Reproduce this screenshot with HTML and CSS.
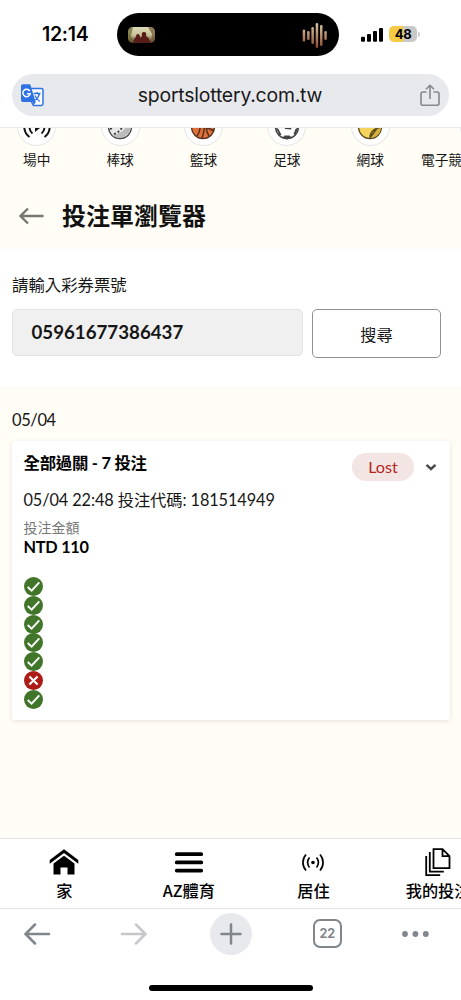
FILE: index.html
```
<!DOCTYPE html>
<html lang="zh-Hant">
<head>
<meta charset="utf-8">
<meta name="viewport" content="width=device-width, initial-scale=1">
<title>投注單瀏覽器</title>
<link rel="stylesheet" href="styles.css">
</head>
<body>
<svg class="defs" width="0" height="0">
  <symbol id="check" viewBox="0 0 19 19"><circle cx="9.5" cy="9.5" r="9.5" fill="#41762a"/><path d="M3.700 10l3.900 3.700 7.700-8.300" fill="none" stroke="#fff" stroke-width="1.900"/></symbol>
  <symbol id="cross" viewBox="0 0 19 19"><circle cx="9.5" cy="9.5" r="9.5" fill="#ad1d17"/><path d="M5.400 5.400l8.200 8.200M13.600 5.400l-8.200 8.200" fill="none" stroke="#fff" stroke-width="2.100"/></symbol>
</svg>
<header class="status">
  <span class="time">12:14</span>
  <div class="island">
    <svg class="art" width="27" height="16" viewBox="0 0 27 16">
      <defs><linearGradient id="sky" x2="0" y2="1"><stop offset="0" stop-color="#dedab8"/><stop offset=".5" stop-color="#c9c49a"/><stop offset="1" stop-color="#4a2d16"/></linearGradient><clipPath id="round"><rect width="27" height="16" rx="5"/></clipPath></defs>
      <g clip-path="url(#round)"><rect width="27" height="16" fill="url(#sky)"/><path d="M0 0h5l-2 9 3 7H0z" fill="#66652b" opacity=".7"/><path d="M20 0h7v16h-4l1-9z" fill="#72552f" opacity=".7"/><path d="M5 16q1-5 3-6 0-3 2-3t2 4l2-2q-1-4 2-4 3 0 2 4 4 2 4 7z" fill="#581d18"/></g>
    </svg>
    <svg width="26" height="26" viewBox="0 0 26 26">
      <defs><linearGradient id="wave" gradientUnits="userSpaceOnUse" x1="0" y1="1" x2="0" y2="25"><stop offset="0" stop-color="#d4c7a5"/><stop offset=".5" stop-color="#b98e6c"/><stop offset="1" stop-color="#8e4c35"/></linearGradient></defs>
      <g fill="url(#wave)"><rect x=".7" y="7.5" width="2.500" height="12" rx="1.200"/><rect x="5.100" y="9" width="2.500" height="9" rx="1.200"/><rect x="9.400" y="5" width="2.500" height="17" rx="1.200"/><rect x="13.700" y="1" width="2.500" height="25" rx="1.200"/><rect x="18" y="3" width="2.500" height="21" rx="1.200"/><rect x="22.300" y="9" width="2.500" height="9" rx="1.200"/></g>
    </svg>
  </div>
  <svg class="signal" width="22" height="14" viewBox="0 0 22 14"><rect y="8.700" width="4" height="5" rx="1"/><rect x="6" y="6" width="4" height="7.700" rx="1"/><rect x="12" y="3" width="4" height="10.700" rx="1"/><rect x="18" width="4" height="13.700" rx="1"/></svg>
  <span class="battery">48</span><i class="cap"></i>
</header>
<div class="address">
  <svg width="23" height="23" viewBox="0 0 23 23"><path d="M10 4.400h10.300q1.700 0 1.700 1.700v13.700q0 1.700-1.700 1.700h-7.800L10 17" fill="#fff" stroke="#2f72e4" stroke-width="1.500"/><path d="M1.700.3h6.600q1 0 1.300 1l5 16.700H1.700Q0 18 0 16.300V2Q0 .3 1.700.3zM12 18h3l-3 3.500z" fill="#2f72e4"/><path d="M8.700 7A3.700 3.700 0 1 0 9.200 9.700H5.900" fill="none" stroke="#fff" stroke-width="1.500"/><path d="M12.500 9.500h7M16 8v1.500M18.500 9.500q-1 4.500-4.500 6.500M13.800 11.500q2 4 5.200 6" fill="none" stroke="#2f72e4" stroke-width="1.300"/></svg>
  <span class="host">sportslottery.com.tw</span>
  <svg width="20" height="23" viewBox="0 0 20 23" fill="none" stroke="#84898e" stroke-width="1.600"><path d="M6.500 8H3Q1 8 1 10v9.200q0 2 2 2h14q2 0 2-2V10q0-2-2-2h-3.500M10 15V1.500M6 5.300l4-4 4 4"/></svg>
</div>
<main class="page">
  <nav class="sports">
    <a><span class="disc"><svg width="30" height="30" viewBox="0 0 30 30" fill="none" stroke="#151515" stroke-width="2"><path d="M5.500 7a12 12 0 0 0 2 18M24.500 7a12 12 0 0 1-2 18M9.500 10a8 8 0 0 0 1 11.500M20.500 10a8 8 0 0 1-1 11.500"/><path d="M13 12v8l5-4z" fill="#151515" stroke="none"/></svg></span>場中</a>
    <a><span class="disc"><svg width="26" height="26" viewBox="0 0 26 26"><circle cx="13" cy="13" r="11.500" fill="#e8e8e8" stroke="#444" stroke-width="1.400"/><path d="M5 21q12-1 17-13l2 6q-3 9-12 10-4 0-7-3z" fill="#bbb"/><path d="M7 20q9-3 11-15M3 15q6-1 8-9" fill="none" stroke="#333" stroke-width="1.700" stroke-dasharray="2 2"/></svg></span>棒球</a>
    <a><span class="disc"><svg width="26" height="26" viewBox="0 0 26 26"><circle cx="13" cy="13" r="11.500" fill="#df7138" stroke="#54311f" stroke-width="1.400"/><path d="M2 13q12-2 22 4M13 1.500Q16 14 12 24M5 5q9 7 2 17M21 5q-8 8-2 17" fill="none" stroke="#54311f" stroke-width="1.500"/></svg></span>籃球</a>
    <a><span class="disc"><svg width="26" height="26" viewBox="0 0 26 26"><circle cx="13" cy="13" r="11.500" fill="#fff" stroke="#444" stroke-width="1.500"/><path d="M9 9l5-3 5 4-2 5.500-6-.5zM1.500 13l3 2 3 6-2 .5zM8.500 24l2-2.500h5l2 2-4.500 2zM24.500 13l-3 2-2 5 2 1z" fill="#444"/></svg></span>足球</a>
    <a><span class="disc"><svg width="26" height="26" viewBox="0 0 26 26"><circle cx="13" cy="13" r="11.500" fill="#f5d35c" stroke="#5a4b1f" stroke-width="1.400"/><path d="M13 24q0-9 11-11 0 9-11 11z" fill="#d9b13e"/><path d="M13 24q0-9 11.500-11M13.500 23l6-8" fill="none" stroke="#5a4b1f" stroke-width="1.500"/></svg></span>網球</a>
    <a class="wide"><span class="disc"></span>電子競技</a>
  </nav>
  <div class="heading">
    <svg width="25" height="18" viewBox="0 0 25 18" fill="none" stroke="#777672" stroke-width="2.300"><path d="M24.500 9H2M9 1.500L1.500 9 9 16.500"/></svg>
    <h1>投注單瀏覽器</h1>
  </div>
  <section class="search">
    <label>請輸入彩券票號</label>
    <div class="controls"><div class="field">05961677386437</div><button>搜尋</button></div>
  </section>
  <section class="results">
    <div class="date">05/04</div>
    <article class="card">
      <div class="top"><h2>全部過關 - 7 投注</h2><span class="lost">Lost</span>
        <svg width="12" height="8" viewBox="0 0 12 8" fill="none" stroke="#4b4b4b" stroke-width="2.400"><path d="M1.500 1.800L6 6l4.500-4.200"/></svg></div>
      <div class="code">05/04 22:48 投注代碼: 181514949</div>
      <div class="caption">投注金額</div>
      <div class="amount">NTD 110</div>
      <div class="legs">
        <svg><use href="#check"/></svg><svg><use href="#check"/></svg><svg><use href="#check"/></svg><svg><use href="#check"/></svg><svg><use href="#check"/></svg><svg><use href="#cross"/></svg><svg><use href="#check"/></svg>
      </div>
    </article>
  </section>
</main>
<nav class="tabs">
  <a><svg width="30" height="30" viewBox="0 0 30 30"><path d="M15 2.200L29.300 13v3.800L15 6 .7 16.800V13z"/><path d="M15 8.700l10.500 7.800V27.500H18.500v-7h-7v7H4.500v-11z"/></svg>家</a>
  <a><svg width="30" height="30" viewBox="0 0 30 30" stroke="#000" stroke-width="3.700" stroke-linecap="round"><path d="M2.700 7.200h24.600M2.700 15.400h24.600M2.700 23.600h24.600"/></svg>AZ體育</a>
  <a><svg width="30" height="30" viewBox="0 0 30 30" fill="none" stroke="#000" stroke-width="1.700"><circle cx="15" cy="15.500" r="1.800" fill="#000" stroke="none"/><path d="M8 7.500a12 12 0 0 0 0 16M22 7.500a12 12 0 0 1 0 16M11.500 10.500a7.500 7.500 0 0 0 0 10M18.500 10.500a7.500 7.500 0 0 1 0 10"/></svg>居住</a>
  <a><svg width="30" height="30" viewBox="0 0 30 30" fill="none" stroke="#000" stroke-width="1.800"><path d="M10.500 2.200h9l7 7v12h-16zM19.500 2.200v7h7M6.800 5v19.700h14M3.200 9v19.200h14"/></svg>我的投注</a>
</nav>
<footer class="toolbar">
  <a><svg width="27" height="22" viewBox="0 0 27 22" fill="none" stroke="#80868b" stroke-width="2.500" stroke-linecap="round"><path d="M25 11H1.700M11 1.500L1.500 11l9.500 9.500"/></svg></a>
  <a><svg width="27" height="22" viewBox="0 0 27 22" fill="none" stroke="#c6c7c8" stroke-width="2.500" stroke-linecap="round"><path d="M2 11h23.300M16 1.500l9.500 9.500-9.500 9.500"/></svg></a>
  <a class="add"><svg width="22" height="22" viewBox="0 0 22 22" stroke="#80868b" stroke-width="2.500" stroke-linecap="round"><path d="M1.500 11h19M11 1.500v19"/></svg></a>
  <a class="count">22</a>
  <a class="more"><svg width="27" height="6" viewBox="0 0 27 6" fill="#80868b"><circle cx="3" cy="3" r="2.900"/><circle cx="13.400" cy="3" r="2.900"/><circle cx="23.800" cy="3" r="2.900"/></svg></a>
</footer>
<div class="homebar"></div>
</body>
</html>
```
FILE: styles.css
```
* { box-sizing: border-box; }
body { margin: 0; width: 461px; height: 1000px; overflow: hidden; background: #fff; color: #161616; font-family: Lato, "Noto Sans CJK TC", sans-serif; }
svg { display: block; flex: none; }
.defs { position: absolute; }
h1, h2 { margin: 0; white-space: nowrap; }

.status { height: 74px; padding: 13px 0 0 42px; display: flex; align-items: flex-start; }
.time { width: 75px; font: 600 19.5px/43px Inter, sans-serif; letter-spacing: -.3px; color: #000; }
.island { width: 222px; height: 43px; border-radius: 22px; background: #000; display: flex; align-items: center; justify-content: space-between; padding: 0 11px; }
.signal { margin: 14.5px 6px 0 22px; }
.battery { width: 28px; height: 16px; margin-top: 13px; border-radius: 5px; background: linear-gradient(90deg, #f5ca45 49%, #c9c9c9 49%); font: 700 13px/16px Inter, sans-serif; letter-spacing: -.3px; text-align: center; color: #000; }
.cap { width: 2px; height: 5px; margin: 19px 0 0 1px; border-radius: 0 2px 2px 0; background: #ccc; }

.address { height: 42px; margin: 0 12px; padding: 0 9px; display: flex; align-items: center; justify-content: space-between; border-radius: 21px; background: #e8e9ed; }
.host { padding-right: 4px; font: 400 19.4px/42px Inter, sans-serif; letter-spacing: -.2px; color: #1a1a1a; }

.page { height: 711px; margin-top: 11px; border-top: 1px solid #e9e9e7; background: #fffdf5; }
.sports { height: 61px; display: flex; overflow: hidden; margin-left: -5px; }
.sports a { flex: none; width: 83.4px; display: flex; flex-direction: column; align-items: center; font-size: 13.7px; line-height: 20px; white-space: nowrap; }
.sports .wide { width: 134px; padding-left: 9px; align-items: flex-start; }
.disc { width: 39px; height: 39px; margin: -21px 0 4px; border: 1px solid #e5e5e5; border-radius: 50%; background: #fff; display: flex; align-items: center; justify-content: center; }
.wide .disc { margin-left: 39px; }
.heading { height: 60px; display: flex; align-items: center; gap: 18px; padding: 0 0 6px 19px; }
.heading h1 { font-size: 24px; line-height: 36px; color: #111; }
.search { height: 137px; padding: 24px 20px 0 12px; background: #fff; }
.search label { display: block; font-size: 16.4px; line-height: 24px; margin-bottom: 12px; }
.controls { display: flex; gap: 9px; align-items: flex-start; }
.field { width: 291px; height: 47px; padding-left: 18.5px; border: 1px solid #e4e4e4; border-radius: 5px; background: #f0f0f0; font-weight: 700; font-size: 18.7px; line-height: 45px; }
.controls button { width: 129px; height: 49px; padding: 0; border: 1px solid #929292; border-radius: 5px; background: #fff; color: #161616; font: 400 16.2px/46px "Noto Sans CJK TC", sans-serif; }
.results { padding: 22px 12px 0; }
.date { height: 33px; font-size: 16.5px; line-height: 24px; letter-spacing: -.4px; }
.card { width: 438px; height: 279px; padding: 10px 12px 10px 11.5px; border-radius: 3px; background: #fff; box-shadow: 0 1px 5px #0000001c; }
.top { display: flex; align-items: center; height: 32px; }
.top h2 { width: 328.5px; padding-bottom: 8px; font-size: 16.4px; line-height: 24px; letter-spacing: -.25px; color: #000; }
.lost { width: 62px; height: 28px; margin-right: 11px; border-radius: 14px; background: #f3e5e4; color: #b52620; font-size: 16.2px; line-height: 28px; text-align: center; }
.code { margin-top: 5px; font-size: 16.3px; line-height: 24px; letter-spacing: -.09px; white-space: nowrap; }
.caption { margin-top: 7px; font-size: 14px; line-height: 18px; color: #777; }
.amount { font-size: 16.3px; line-height: 20px; font-weight: 700; letter-spacing: -.25px; color: #000; }
.legs { margin-top: 20px; display: grid; grid-auto-rows: 18.8px; }
.legs svg { width: 19px; height: 19px; }

.tabs { height: 71px; padding: 8px 0 0 2px; border-top: 1px solid #e2e2e4; border-bottom: 1px solid #e2e2e4; display: flex; overflow: hidden; }
.tabs a { flex: none; width: 124.6px; display: flex; flex-direction: column; align-items: center; font: 500 16.2px/26px "Noto Sans CJK TC", sans-serif; color: #000; white-space: nowrap; }
.toolbar { height: 75px; display: grid; grid-template-columns: 42px 42px 42px 42px 42px; justify-content: space-between; padding: 4px 16px 0 16px; }
.toolbar a { height: 42px; display: flex; align-items: center; justify-content: center; }
.add { border-radius: 50%; background: #e8e9ed; }
.toolbar .more { padding-right: 18px; }
.toolbar .count { width: 29px; height: 29px; margin: 6px auto; border: 2.5px solid #80868b; border-radius: 7px; color: #80868b; font: 700 12.5px/20px Inter, sans-serif; }
.homebar { width: 164px; height: 6px; margin: 1px 0 0 149px; border-radius: 3px; background: #000; }
```
